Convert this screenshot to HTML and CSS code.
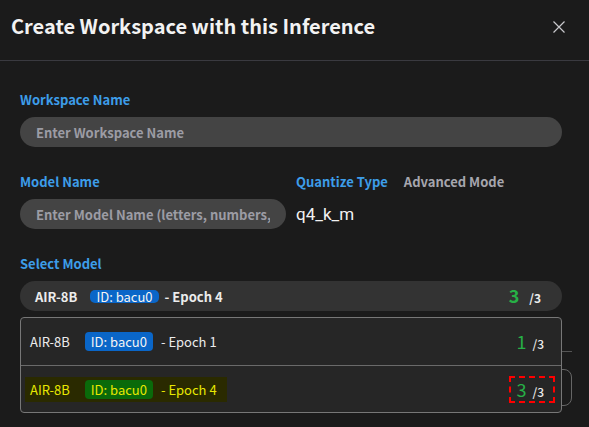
FILE: index.html
```html
<!DOCTYPE html>
<html lang="en">
<head>
    <meta charset="utf-8">
    <link rel="stylesheet" href="styles.css">
</head>
<body>
<div class="modal">
    <div class="modal-head">
        <h2 class="modal-title">Create Workspace with this Inference</h2>
        <span class="close-btn">
            <svg width="12" height="12" viewBox="0 0 12 12"><path d="M0.5 0.5L11.5 11.5M11.5 0.5L0.5 11.5" stroke="#c8c8cc" stroke-width="1.2" fill="none"/></svg>
        </span>
    </div>
    <div class="modal-body">
        <div class="field">
            <label class="field-label">Workspace Name</label>
            <input class="text-input" type="text" placeholder="Enter Workspace Name">
        </div>
        <div class="field-row">
            <div class="field model-field">
                <label class="field-label">Model Name</label>
                <input class="text-input" type="text" placeholder="Enter Model Name (letters, numbers, underscores)">
            </div>
            <div class="field quant-field">
                <div class="quant-labels">
                    <span class="field-label">Quantize Type</span>
                    <span class="mode-label">Advanced Mode</span>
                </div>
                <div class="quant-value">q4_k_m</div>
            </div>
        </div>
        <div class="field">
            <label class="field-label">Select Model</label>
            <div class="select-wrap">
                <div class="select-box">
                    <span class="model-name">AIR-8B</span>
                    <span class="id-badge">ID: bacu0</span>
                    <span class="epoch">- Epoch 4</span>
                    <span class="count">
                        <span class="num">3</span>
                        <span class="total">/3</span>
                    </span>
                </div>
                <ul class="dropdown">
                    <li class="option">
                        <span class="option-info">
                            <span class="model-name">AIR-8B</span>
                            <span class="id-badge">ID: bacu0</span>
                            <span class="epoch">- Epoch 1</span>
                        </span>
                        <span class="count">
                            <span class="num">1</span>
                            <span class="total">/3</span>
                        </span>
                    </li>
                    <li class="option selected">
                        <span class="option-info">
                            <span class="model-name">AIR-8B</span>
                            <span class="id-badge">ID: bacu0</span>
                            <span class="epoch">- Epoch 4</span>
                        </span>
                        <span class="count flag">
                            <span class="num">3</span>
                            <span class="total">/3</span>
                        </span>
                    </li>
                </ul>
            </div>
        </div>
        <div class="modal-foot">
            <div class="foot-line"></div>
            <div class="foot-btn"></div>
        </div>
    </div>
</div>
</body>
</html>
```

FILE: styles.css
```css
* {
    margin: 0;
    padding: 0;
    box-sizing: border-box;
}
ul {
    list-style: none;
}
body {
    background-color: #1b1b1b;
    font-family: "Noto Sans CJK KR", "Noto Sans", sans-serif;
    color: #ececec;
    overflow: hidden;
}
.modal {
    width: 589px;
    height: 427px;
}
.modal-head {
    display: flex;
    align-items: center;
    justify-content: space-between;
    height: 61px;
    padding: 0 24px 8px 11px;
    border-bottom: 1px solid #3a3a40;
}
.modal-title {
    font-size: 20px;
    font-weight: 700;
    line-height: 28px;
    color: #f2f2f2;
}
.close-btn {
    display: flex;
    width: 12px;
    height: 12px;
    margin-top: 2px;
}
.modal-body {
    padding: 29px 27px 0 20px;
}
.field {
    display: flex;
    flex-direction: column;
    margin-bottom: 25px;
}
.field-label {
    font-size: 13px;
    font-weight: 700;
    line-height: 20px;
    color: #3d9de9;
    margin-bottom: 7px;
}
.text-input {
    height: 30px;
    border: none;
    outline: none;
    border-radius: 15px;
    background-color: #444444;
    padding: 0 16px;
    font-family: inherit;
    font-size: 13px;
    font-weight: 700;
    color: #ececec;
}
.text-input::placeholder {
    color: #9c9ca4;
}
.field-row {
    display: flex;
    gap: 10px;
}
.model-field {
    width: 266px;
}
.quant-labels {
    display: flex;
    gap: 16px;
}
.mode-label {
    font-size: 13px;
    font-weight: 700;
    line-height: 20px;
    color: #a6a6ae;
}
.quant-value {
    height: 30px;
    line-height: 30px;
    font-family: Roboto, sans-serif;
    font-size: 17px;
    color: #f2f2f2;
}
.select-wrap {
    position: relative;
    z-index: 2;
}
.select-box {
    display: flex;
    align-items: center;
    height: 30px;
    padding: 0 21px 0 15px;
    border-radius: 15px;
    background-color: #333333;
    font-size: 13px;
    font-weight: 700;
}
.model-name {
    margin-right: 13px;
}
.id-badge {
    display: inline-block;
    height: 19px;
    line-height: 19px;
    padding: 0 6px;
    border-radius: 4px;
    background-color: #0a66c8;
    color: #f4f4f4;
    font-weight: 400;
    margin-right: 6px;
}
.select-box .id-badge {
    height: 13px;
    line-height: 13px;
    border-radius: 5px;
}
.count {
    margin-left: auto;
    display: flex;
    align-items: baseline;
}
.num {
    font-size: 18px;
    line-height: 18px;
    color: #27b046;
    margin-right: 10px;
}
.total {
    font-size: 12px;
    font-weight: 700;
    color: #ececec;
}
.dropdown {
    position: absolute;
    top: 36px;
    left: 0;
    right: 0;
    border: 1px solid #777777;
    border-radius: 4px;
    background-color: #262626;
}
.option {
    display: flex;
    align-items: center;
    height: 47px;
    padding: 0 6px 0 4px;
    font-size: 13px;
}
.option + .option {
    border-top: 1px solid #6a6a6a;
}
.option-info {
    display: flex;
    align-items: center;
    height: 25px;
    padding: 0 10px 0 5px;
}
.option .model-name {
    margin-right: 15px;
}
.option .id-badge {
    margin-right: 8px;
}
.option .count {
    border: 2px dashed transparent;
    padding: 2px 9px 1px 5px;
}
.option .num {
    margin-right: 6px;
}
.option .total {
    font-weight: 500;
}
.selected .option-info {
    background-color: #2a2a00;
    color: #e8e800;
}
.selected .id-badge {
    background-color: #0a6a0a;
    color: #e8e800;
}
.count.flag {
    border-color: #ff0000;
}
.modal-foot {
    height: 100px;
    padding-top: 15px;
}
.foot-line {
    height: 1px;
    margin: 0 -10px 17px 200px;
    background-color: #555555;
}
.foot-btn {
    width: 120px;
    height: 37px;
    margin-left: auto;
    margin-right: -10px;
    border: 1px solid #666666;
    border-radius: 8px;
}
```
